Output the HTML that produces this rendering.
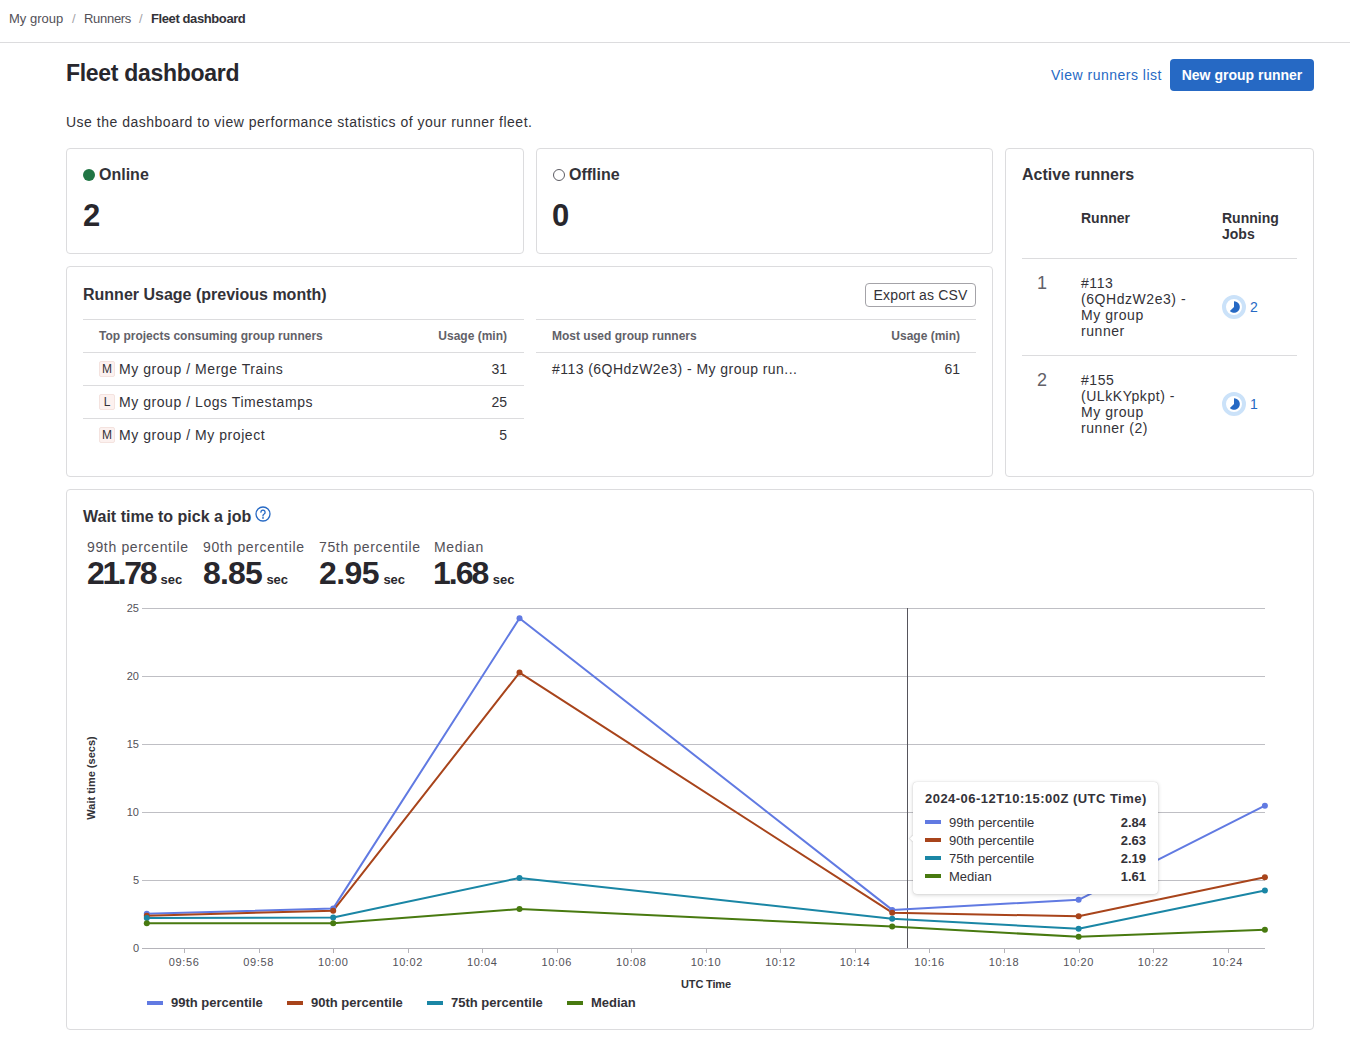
<!DOCTYPE html>
<html><head><meta charset="utf-8">
<style>
*{box-sizing:border-box;margin:0;padding:0}
html,body{width:1350px;height:1049px;overflow:hidden;background:#fff}
body{font-family:"Liberation Sans",sans-serif;color:#333238;position:relative;-webkit-font-smoothing:antialiased}
.abs{position:absolute;white-space:nowrap}
.card{position:absolute;border:1px solid #dcdcde;border-radius:4px;background:#fff}
.b{font-weight:bold}
.crumb{top:11px;font-size:13px;color:#535158;line-height:16px}
.sep{color:#a4a3a8}
.hr{position:absolute;left:0;top:42px;width:1350px;height:1px;background:#dcdcde}
.h1{left:66px;top:59px;font-size:23px;font-weight:bold;color:#28272d;line-height:28px;letter-spacing:-0.29px}
.link{color:#2669c4}
.btn{position:absolute;left:1170px;top:59px;width:144px;height:32px;border-radius:4px;background:#2669c4;color:#fff;font-size:14px;font-weight:bold;text-align:center;line-height:32px}
.desc{left:66px;top:113px;font-size:14px;line-height:18px;color:#333238;letter-spacing:0.505px}
.stat-t{font-size:16px;font-weight:bold;line-height:20px;margin-top:1px}
.bignum{font-size:31px;font-weight:bold;line-height:32px;color:#28272d}
.th{font-size:12px;font-weight:bold;color:#626168;line-height:16px}
.td{font-size:14px;line-height:18px;color:#333238;letter-spacing:0.55px}
.line{position:absolute;height:1px;background:#dcdcde}
.avatar{position:absolute;width:16px;height:16px;border-radius:2px;background:#fcf1ef;border:1px solid #f4e3df;font-size:12px;line-height:14px;text-align:center;color:#333238}

.jobs{width:24px;height:24px}
.st-l{font-size:14px;color:#535158;line-height:18px;letter-spacing:0.65px}
.st-v{font-size:32px;font-weight:bold;color:#28272d;line-height:36px}
.unit{font-size:13px;margin-left:4px;letter-spacing:0}
.tip{position:absolute;left:913px;top:782px;width:245px;height:112px;background:#fff;border-radius:4px;box-shadow:0 1px 4px rgba(5,5,6,.18),0 0 1px rgba(5,5,6,.2)}
.tip::before{content:"";position:absolute;left:-2.5px;top:53.5px;width:5px;height:5px;background:#fff;transform:rotate(45deg);box-shadow:-1px 1px 1px rgba(5,5,6,.1)}
.tl{left:12px;font-size:13px;line-height:16px;color:#333238}
.tl i{display:inline-block;width:16px;height:4px;vertical-align:middle;margin-right:8px;position:relative;top:-2px}
.tv{right:12px;font-size:13px;line-height:16px;font-weight:bold;color:#333238}
</style></head>
<body>
<!-- breadcrumb -->
<div class="abs crumb" style="left:9px">My group</div>
<div class="abs crumb sep" style="left:72px">/</div>
<div class="abs crumb" style="left:84px;letter-spacing:-0.3px">Runners</div>
<div class="abs crumb sep" style="left:139px">/</div>
<div class="abs crumb b" style="left:151px;color:#333238;letter-spacing:-0.4px">Fleet dashboard</div>
<div class="hr"></div>

<div class="abs h1">Fleet dashboard</div>
<div class="abs link" style="left:1051px;top:66px;font-size:14px;line-height:18px;letter-spacing:0.5px">View runners list</div>
<div class="btn">New group runner</div>
<div class="abs desc">Use the dashboard to view performance statistics of your runner fleet.</div>

<!-- Online -->
<div class="card" style="left:66px;top:148px;width:458px;height:106px"></div>
<div class="abs" style="left:83px;top:169px;width:12px;height:12px;border-radius:50%;background:#217645"></div>
<div class="abs stat-t" style="left:99px;top:164px">Online</div>
<div class="abs bignum" style="left:83px;top:200px">2</div>

<!-- Offline -->
<div class="card" style="left:536px;top:148px;width:457px;height:106px"></div>
<div class="abs" style="left:553px;top:169px;width:12px;height:12px;border-radius:50%;border:1.75px solid #5d5c63"></div>
<div class="abs stat-t" style="left:569px;top:164px">Offline</div>
<div class="abs bignum" style="left:552px;top:200px">0</div>

<!-- Active runners -->
<div class="card" style="left:1005px;top:148px;width:309px;height:329px"></div>
<div class="abs stat-t" style="left:1022px;top:164px">Active runners</div>

<!-- Runner usage -->
<div class="card" style="left:66px;top:266px;width:927px;height:211px"></div>
<div class="abs stat-t" style="left:83px;top:284px">Runner Usage (previous month)</div>

<!-- Wait time -->
<div class="card" style="left:66px;top:489px;width:1248px;height:541px"></div>
<div class="abs stat-t" style="left:83px;top:506px">Wait time to pick a job</div>


<!-- Active runners table -->
<div class="abs th" style="left:1081px;top:210px;font-size:14px;color:#333238">Runner</div>
<div class="abs th" style="left:1222px;top:210px;font-size:14px;color:#333238;line-height:16px">Running<br>Jobs</div>
<div class="line" style="left:1022px;top:258px;width:275px"></div>
<div class="abs" style="left:1037px;top:273px;font-size:18px;color:#626168;line-height:20px">1</div>
<div class="abs td" style="left:1081px;top:275px;line-height:16px">#113<br>(6QHdzW2e3) -<br>My group<br>runner</div>
<div class="abs jobs" style="left:1222px;top:295px"><svg width="24" height="24" viewBox="0 0 24 24" style="position:absolute;left:0;top:0"><circle cx="12" cy="12" r="10" fill="none" stroke="#cbe2f9" stroke-width="4"/><path d="M12 6.2A5.8 5.8 0 1 1 7.9 16.1L12 12Z" fill="#2669c4"/></svg></div>
<div class="abs link" style="left:1250px;top:298px;font-size:14px;line-height:18px">2</div>
<div class="line" style="left:1022px;top:355px;width:275px"></div>
<div class="abs" style="left:1037px;top:370px;font-size:18px;color:#626168;line-height:20px">2</div>
<div class="abs td" style="left:1081px;top:372px;line-height:16px">#155<br>(ULkKYpkpt) -<br>My group<br>runner (2)</div>
<div class="abs jobs" style="left:1222px;top:392px"><svg width="24" height="24" viewBox="0 0 24 24" style="position:absolute;left:0;top:0"><circle cx="12" cy="12" r="10" fill="none" stroke="#cbe2f9" stroke-width="4"/><path d="M12 6.2A5.8 5.8 0 1 1 7.9 16.1L12 12Z" fill="#2669c4"/></svg></div>
<div class="abs link" style="left:1250px;top:395px;font-size:14px;line-height:18px">1</div>

<!-- Usage -->
<div class="abs" style="left:865px;top:283px;width:111px;height:24px;border:1px solid #a4a3a8;border-radius:4px;font-size:14px;line-height:22px;text-align:center;color:#333238;letter-spacing:0.15px">Export as CSV</div>
<div class="line" style="left:83px;top:319px;width:441px"></div>
<div class="line" style="left:83px;top:352px;width:441px"></div>
<div class="line" style="left:83px;top:385px;width:441px"></div>
<div class="line" style="left:83px;top:418px;width:441px"></div>
<div class="abs th" style="left:99px;top:328px">Top projects consuming group runners</div>
<div class="abs th" style="right:843px;top:328px">Usage (min)</div>
<div class="avatar" style="left:99px;top:361px">M</div>
<div class="abs td" style="left:119px;top:360px">My group / Merge Trains</div>
<div class="abs td" style="right:843px;top:360px;letter-spacing:0">31</div>
<div class="avatar" style="left:99px;top:394px">L</div>
<div class="abs td" style="left:119px;top:393px">My group / Logs Timestamps</div>
<div class="abs td" style="right:843px;top:393px;letter-spacing:0">25</div>
<div class="avatar" style="left:99px;top:427px">M</div>
<div class="abs td" style="left:119px;top:426px">My group / My project</div>
<div class="abs td" style="right:843px;top:426px;letter-spacing:0">5</div>

<div class="line" style="left:536px;top:319px;width:440px"></div>
<div class="line" style="left:536px;top:352px;width:440px"></div>
<div class="abs th" style="left:552px;top:328px">Most used group runners</div>
<div class="abs th" style="right:390px;top:328px">Usage (min)</div>
<div class="abs td" style="left:552px;top:360px;letter-spacing:0.45px">#113 (6QHdzW2e3) - My group run...</div>
<div class="abs td" style="right:390px;top:360px;letter-spacing:0">61</div>

<!-- Wait time stats -->
<svg class="abs" style="left:255px;top:506px" width="16" height="16" viewBox="0 0 16 16"><circle cx="8" cy="8" r="7" fill="none" stroke="#2669c4" stroke-width="1.3"/><path d="M5.9 6.2a2.1 2.1 0 1 1 3.2 1.8c-.7.4-1.1.8-1.1 1.6v.3" fill="none" stroke="#2669c4" stroke-width="1.3" stroke-linecap="round"/><circle cx="8" cy="11.9" r=".9" fill="#2669c4"/></svg>
<div class="abs st-l" style="left:87px;top:538px">99th percentile</div>
<div class="abs st-v" style="left:87px;top:555px;letter-spacing:-2.4px">21.78<span class="unit" style="margin-left:5.4px">sec</span></div>
<div class="abs st-l" style="left:203px;top:538px">90th percentile</div>
<div class="abs st-v" style="left:203px;top:555px;letter-spacing:-0.85px">8.85<span class="unit" style="margin-left:4.5px">sec</span></div>
<div class="abs st-l" style="left:319px;top:538px">75th percentile</div>
<div class="abs st-v" style="left:319px;top:555px;letter-spacing:-0.6px">2.95<span class="unit" style="margin-left:4.5px">sec</span></div>
<div class="abs st-l" style="left:434px;top:538px">Median</div>
<div class="abs st-v" style="left:433px;top:555px;letter-spacing:-2px">1.68<span class="unit" style="margin-left:5.5px">sec</span></div>
<svg class="abs" style="left:0;top:0" width="1350" height="1049" viewBox="0 0 1350 1049">
<g stroke="#bfbfc4" stroke-width="1">
<line x1="142" y1="880.5" x2="1265" y2="880.5"/>
<line x1="142" y1="812.5" x2="1265" y2="812.5"/>
<line x1="142" y1="744.5" x2="1265" y2="744.5"/>
<line x1="142" y1="676.5" x2="1265" y2="676.5"/>
<line x1="142" y1="608.5" x2="1265" y2="608.5"/>
</g>
<line x1="142" y1="948.5" x2="1265" y2="948.5" stroke="#b5b4ba" stroke-width="1"/>
<g stroke="#b5b4ba" stroke-width="1">
<line x1="184.5" y1="949" x2="184.5" y2="953"/>
<line x1="259.5" y1="949" x2="259.5" y2="953"/>
<line x1="333.5" y1="949" x2="333.5" y2="953"/>
<line x1="408.5" y1="949" x2="408.5" y2="953"/>
<line x1="482.5" y1="949" x2="482.5" y2="953"/>
<line x1="557.5" y1="949" x2="557.5" y2="953"/>
<line x1="631.5" y1="949" x2="631.5" y2="953"/>
<line x1="706.5" y1="949" x2="706.5" y2="953"/>
<line x1="780.5" y1="949" x2="780.5" y2="953"/>
<line x1="855.5" y1="949" x2="855.5" y2="953"/>
<line x1="929.5" y1="949" x2="929.5" y2="953"/>
<line x1="1004.5" y1="949" x2="1004.5" y2="953"/>
<line x1="1079.5" y1="949" x2="1079.5" y2="953"/>
<line x1="1153.5" y1="949" x2="1153.5" y2="953"/>
<line x1="1228.5" y1="949" x2="1228.5" y2="953"/>
</g>
<g font-family="Liberation Sans" font-size="11" fill="#535158" text-anchor="middle" letter-spacing="0.6">
<text x="184.1" y="966">09:56</text>
<text x="258.6" y="966">09:58</text>
<text x="333.2" y="966">10:00</text>
<text x="407.7" y="966">10:02</text>
<text x="482.2" y="966">10:04</text>
<text x="556.8" y="966">10:06</text>
<text x="631.3" y="966">10:08</text>
<text x="705.9" y="966">10:10</text>
<text x="780.4" y="966">10:12</text>
<text x="854.9" y="966">10:14</text>
<text x="929.5" y="966">10:16</text>
<text x="1004.0" y="966">10:18</text>
<text x="1078.6" y="966">10:20</text>
<text x="1153.1" y="966">10:22</text>
<text x="1227.6" y="966">10:24</text>
</g>
<g font-family="Liberation Sans" font-size="11" fill="#535158" text-anchor="end">
<text x="139" y="951.5">0</text>
<text x="139" y="883.5">5</text>
<text x="139" y="815.5">10</text>
<text x="139" y="747.5">15</text>
<text x="139" y="679.5">20</text>
<text x="139" y="611.5">25</text>
</g>
<text x="706" y="988" font-family="Liberation Sans" font-size="11" font-weight="bold" fill="#333238" text-anchor="middle" letter-spacing="-0.15">UTC Time</text>
<text transform="translate(94.5,778) rotate(-90)" font-family="Liberation Sans" font-size="11" font-weight="bold" fill="#333238" text-anchor="middle">Wait time (secs)</text>
<line x1="907.5" y1="608" x2="907.5" y2="948" stroke="#56555c" stroke-width="1"/>
<polyline points="146.8,913.8 333.2,908.4 519.5,618.2 892.2,909.9 1078.6,899.8 1264.9,805.7" fill="none" stroke="#617ae2" stroke-width="2" stroke-linejoin="round"/>
<polyline points="146.8,915.7 333.2,910.7 519.5,672.6 892.2,912.7 1078.6,916.3 1264.9,877.2" fill="none" stroke="#a8441b" stroke-width="2" stroke-linejoin="round"/>
<polyline points="146.8,918.0 333.2,917.6 519.5,877.9 892.2,918.7 1078.6,928.8 1264.9,890.6" fill="none" stroke="#1a86a5" stroke-width="2" stroke-linejoin="round"/>
<polyline points="146.8,923.3 333.2,923.3 519.5,909.1 892.2,926.6 1078.6,936.8 1264.9,929.7" fill="none" stroke="#487a10" stroke-width="2" stroke-linejoin="round"/>
<circle cx="146.8" cy="913.8" r="3" fill="#617ae2"/>
<circle cx="333.2" cy="908.4" r="3" fill="#617ae2"/>
<circle cx="519.5" cy="618.2" r="3" fill="#617ae2"/>
<circle cx="892.2" cy="909.9" r="3" fill="#617ae2"/>
<circle cx="1078.6" cy="899.8" r="3" fill="#617ae2"/>
<circle cx="1264.9" cy="805.7" r="3" fill="#617ae2"/>
<circle cx="146.8" cy="915.7" r="3" fill="#a8441b"/>
<circle cx="333.2" cy="910.7" r="3" fill="#a8441b"/>
<circle cx="519.5" cy="672.6" r="3" fill="#a8441b"/>
<circle cx="892.2" cy="912.7" r="3" fill="#a8441b"/>
<circle cx="1078.6" cy="916.3" r="3" fill="#a8441b"/>
<circle cx="1264.9" cy="877.2" r="3" fill="#a8441b"/>
<circle cx="146.8" cy="918.0" r="3" fill="#1a86a5"/>
<circle cx="333.2" cy="917.6" r="3" fill="#1a86a5"/>
<circle cx="519.5" cy="877.9" r="3" fill="#1a86a5"/>
<circle cx="892.2" cy="918.7" r="3" fill="#1a86a5"/>
<circle cx="1078.6" cy="928.8" r="3" fill="#1a86a5"/>
<circle cx="1264.9" cy="890.6" r="3" fill="#1a86a5"/>
<circle cx="146.8" cy="923.3" r="3" fill="#487a10"/>
<circle cx="333.2" cy="923.3" r="3" fill="#487a10"/>
<circle cx="519.5" cy="909.1" r="3" fill="#487a10"/>
<circle cx="892.2" cy="926.6" r="3" fill="#487a10"/>
<circle cx="1078.6" cy="936.8" r="3" fill="#487a10"/>
<circle cx="1264.9" cy="929.7" r="3" fill="#487a10"/>
<rect x="147" y="1001" width="16" height="4" fill="#617ae2"/>
<text x="171" y="1007" font-family="Liberation Sans" font-size="13" font-weight="bold" fill="#333238">99th percentile</text>
<rect x="287" y="1001" width="16" height="4" fill="#a8441b"/>
<text x="311" y="1007" font-family="Liberation Sans" font-size="13" font-weight="bold" fill="#333238">90th percentile</text>
<rect x="427" y="1001" width="16" height="4" fill="#1a86a5"/>
<text x="451" y="1007" font-family="Liberation Sans" font-size="13" font-weight="bold" fill="#333238">75th percentile</text>
<rect x="567" y="1001" width="16" height="4" fill="#487a10"/>
<text x="591" y="1007" font-family="Liberation Sans" font-size="13" font-weight="bold" fill="#333238">Median</text>
</svg>
<div class="tip">
<div class="abs b" style="left:12px;top:9px;font-size:13px;color:#333238;letter-spacing:0.47px">2024-06-12T10:15:00Z (UTC Time)</div>
<div class="abs tl" style="top:33px"><i style="background:#617ae2"></i>99th percentile</div><div class="abs tv" style="top:33px">2.84</div>
<div class="abs tl" style="top:51px"><i style="background:#a8441b"></i>90th percentile</div><div class="abs tv" style="top:51px">2.63</div>
<div class="abs tl" style="top:69px"><i style="background:#1a86a5"></i>75th percentile</div><div class="abs tv" style="top:69px">2.19</div>
<div class="abs tl" style="top:87px"><i style="background:#487a10"></i>Median</div><div class="abs tv" style="top:87px">1.61</div>
</div>
</body></html>
